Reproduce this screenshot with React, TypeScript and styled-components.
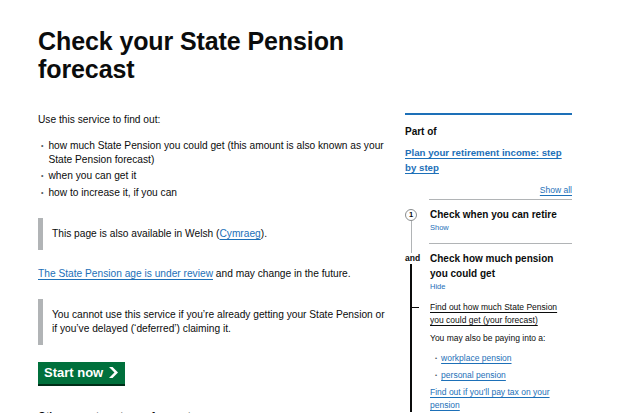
import React from "react";
import styled, { createGlobalStyle } from "styled-components";

const Global = createGlobalStyle`
  html, body { margin: 0; padding: 0; background: #ffffff; }
  body {
    font-family: "Liberation Sans", Arial, sans-serif;
    color: #0b0c0c;
    -webkit-font-smoothing: antialiased;
  }
  * { box-sizing: border-box; }
`;

const Page = styled.main`
  padding: 27px 0 0 38px;
  width: 572px;
`;

const Heading = styled.h1`
  margin: 0 0 30px;
  width: 352px;
  font-size: 25px;
  line-height: 28px;
  font-weight: 700;
  letter-spacing: -0.1px;
`;

const Columns = styled.div`
  display: grid;
  grid-template-columns: 352px 167px;
  column-gap: 15px;
  align-items: start;
`;

const Body = styled.p<{ $mb?: number }>`
  margin: 0 0 ${(p) => p.$mb ?? 12}px;
  font-size: 10.2px;
  line-height: 14px;
`;

const BulletList = styled.ul`
  margin: 0 0 18px;
  padding: 0 0 0 10px;
  font-size: 10.2px;
  line-height: 14px;
  list-style: none;
`;

const BulletItem = styled.li`
  display: flex;
  gap: 5px;
  margin-bottom: 2.4px;
  &::before {
    content: "•";
    font-size: 7px;
    color: #505a5f;
    flex: 0 0 auto;
    margin-left: -7px;
  }
`;

const Inset = styled.div`
  border-left: 5px solid #b1b4b6;
  padding: 9px 0 9px 9px;
  margin: 0 0 17px;
  font-size: 10.2px;
  line-height: 14px;
`;

const Link = styled.a<{ $dark?: boolean }>`
  color: ${(p) => (p.$dark ? "#0b0c0c" : "#1d70b8")};
  text-decoration: underline;
  text-decoration-thickness: 1px;
  text-underline-offset: 2px;
`;

const StartButton = styled.a`
  display: inline-flex;
  align-items: center;
  gap: 6px;
  height: 22px;
  padding: 0 7px 0 6px;
  margin: 0 0 26px;
  background: #00703c;
  color: #ffffff;
  font-size: 13px;
  font-weight: 700;
  text-decoration: none;
  box-shadow: 0 2px 0 #002d18;
`;

const Faded = styled.p`
  margin: 0;
  font-size: 10.2px;
  line-height: 14px;
  font-weight: 700;
  color: #0b0c0c;
`;

/* ---------- sidebar ---------- */

const Sidebar = styled.aside`
  margin-top: 0;
  border-top: 2px solid #1d70b8;
  padding-top: 10px;
`;

const PartOf = styled.p`
  margin: 0 0 6px;
  font-size: 10px;
  line-height: 14px;
  font-weight: 700;
`;

const SeriesLink = styled(Link)`
  display: block;
  font-size: 9.7px;
  line-height: 15px;
  font-weight: 700;
`;

const ShowAllRow = styled.div`
  margin-top: 9.5px;
  text-align: right;
  font-size: 8.5px;
  line-height: 11px;
`;

const Steps = styled.ol`
  list-style: none;
  margin: 3.5px 0 0;
  padding: 0;
`;

const Step = styled.li`
  display: grid;
  grid-template-columns: 24px 1fr;
  position: relative;
`;

const StepLine = styled.span<{ $top: number; $dark?: boolean; $height?: number }>`
  position: absolute;
  left: ${(p) => (p.$dark ? 5.25 : 5.5)}px;
  width: ${(p) => (p.$dark ? 1.5 : 1)}px;
  top: ${(p) => p.$top}px;
  ${(p) => (p.$height != null ? `height: ${p.$height}px;` : "bottom: 0;")}
  background: ${(p) => (p.$dark ? "#0b0c0c" : "#b1b4b6")};
`;

const Marker = styled.div`
  position: relative;
  z-index: 1;
  padding-top: 9.5px;
`;

const Circle = styled.span`
  display: flex;
  align-items: center;
  justify-content: center;
  width: 12px;
  height: 12px;
  border-radius: 50%;
  border: 1px solid #8a8d8e;
  background: #ffffff;
  font-size: 7.5px;
  font-weight: 700;
`;

const AndLabel = styled.span`
  display: block;
  width: 16px;
  background: #ffffff;
  font-size: 8.5px;
  line-height: 11px;
  font-weight: 700;
`;

const StepBody = styled.div<{ $pb?: number }>`
  border-top: 1px solid #b1b4b6;
  padding: 7px 0 ${(p) => p.$pb ?? 10}px 1px;
`;

const StepTitle = styled.h3`
  margin: 0;
  font-size: 10px;
  line-height: 15px;
  font-weight: 700;
`;

const Toggle = styled.span`
  display: block;
  color: #1d70b8;
  font-size: 7.5px;
  line-height: 11px;
`;

const SubLink = styled(Link)`
  display: block;
  font-size: 8.5px;
  line-height: 13px;
`;

const CurrentItem = styled.div`
  position: relative;
  margin-top: 8.5px;
  &::before {
    content: "";
    position: absolute;
    left: -19px;
    top: 6px;
    width: 8px;
    height: 1.5px;
    background: #0b0c0c;
  }
`;

const SmallText = styled.p<{ $mt?: number }>`
  margin: ${(p) => p.$mt ?? 0}px 0 0;
  font-size: 8.5px;
  line-height: 13px;
`;

const SubList = styled.ul`
  list-style: none;
  margin: 7px 0 0;
  padding: 0 0 0 5px;
  font-size: 8.5px;
  line-height: 13px;
`;

const SubItem = styled.li`
  display: flex;
  gap: 4px;
  margin-bottom: 4px;
  &::before {
    content: "•";
    font-size: 6px;
    color: #505a5f;
  }
`;

const TaxLink = styled(SubLink)`
  margin-top: 4px;
`;

const Chevron = () => (
  <svg width="9" height="11" viewBox="0 0 33 40" aria-hidden="true">
    <path fill="currentColor" d="M0 0h13l20 20-20 20H0l20-20z" />
  </svg>
);

export default function App() {
  return (
    <>
      <Global />
      <Page>
        <Heading>Check your State Pension forecast</Heading>
        <Columns>
          <div>
            <Body>Use this service to find out:</Body>
            <BulletList>
              <BulletItem>
                <span>
                  how much State Pension you could get (this amount is also known as your State Pension
                  forecast)
                </span>
              </BulletItem>
              <BulletItem>
                <span>when you can get it</span>
              </BulletItem>
              <BulletItem>
                <span>how to increase it, if you can</span>
              </BulletItem>
            </BulletList>
            <Inset>
              This page is also available in Welsh (<Link href="#">Cymraeg</Link>).
            </Inset>
            <Body $mb={18}>
              <Link href="#">The State Pension age is under review</Link> and may change in the future.
            </Body>
            <Inset>
              You cannot use this service if you’re already getting your State Pension or if you’ve
              delayed (‘deferred’) claiming it.
            </Inset>
            <StartButton href="#" role="button">
              Start now
              <Chevron />
            </StartButton>
            <Faded>Other ways to get your forecast</Faded>
          </div>

          <Sidebar>
            <PartOf>Part of</PartOf>
            <SeriesLink href="#">Plan your retirement income: step by step</SeriesLink>
            <ShowAllRow>
              <Link href="#">Show all</Link>
            </ShowAllRow>
            <Steps>
              <Step>
                <StepLine $top={16} />
                <Marker>
                  <Circle>1</Circle>
                </Marker>
                <StepBody>
                  <StepTitle>Check when you can retire</StepTitle>
                  <Toggle>Show</Toggle>
                </StepBody>
              </Step>
              <Step>
                <StepLine $top={0} $height={10} />
                <StepLine $top={20} $dark />
                <Marker>
                  <AndLabel>and</AndLabel>
                </Marker>
                <StepBody $pb={0}>
                  <StepTitle>Check how much pension you could get</StepTitle>
                  <Toggle>Hide</Toggle>
                  <CurrentItem>
                    <SubLink href="#" $dark>
                      Find out how much State Pension you could get (your forecast)
                    </SubLink>
                  </CurrentItem>
                  <SmallText $mt={5}>You may also be paying into a:</SmallText>
                  <SubList>
                    <SubItem>
                      <Link href="#">workplace pension</Link>
                    </SubItem>
                    <SubItem>
                      <Link href="#">personal pension</Link>
                    </SubItem>
                  </SubList>
                  <TaxLink href="#">Find out if you’ll pay tax on your pension</TaxLink>
                </StepBody>
              </Step>
            </Steps>
          </Sidebar>
        </Columns>
      </Page>
    </>
  );
}
